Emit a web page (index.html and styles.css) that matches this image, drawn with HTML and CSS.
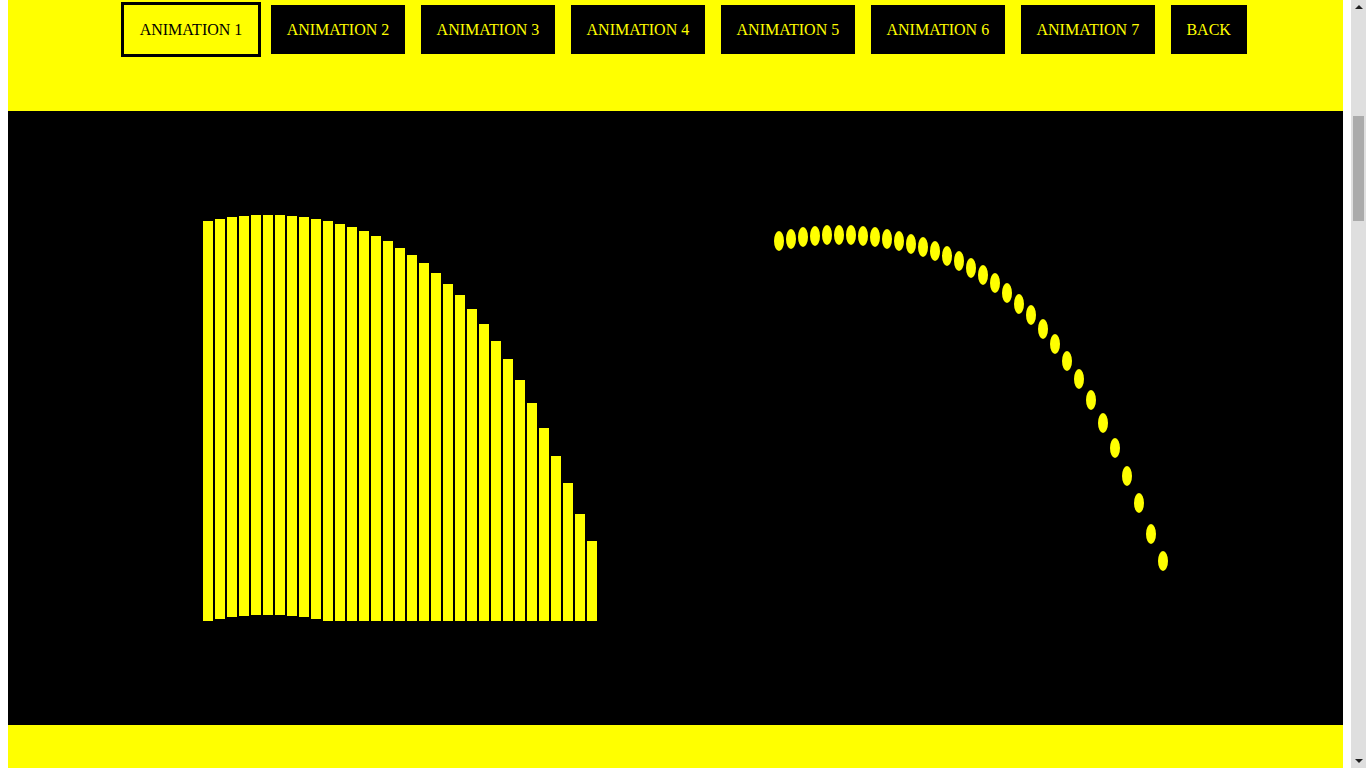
FILE: index.html
```html
<!DOCTYPE html>
<html lang="en">
<head>
<meta charset="utf-8">
<title>Animations</title>
<link rel="stylesheet" href="styles.css">
</head>
<body>
<header class="top">
  <nav class="menu">
    <button class="btn active">ANIMATION 1</button>
    <button class="btn">ANIMATION 2</button>
    <button class="btn">ANIMATION 3</button>
    <button class="btn">ANIMATION 4</button>
    <button class="btn">ANIMATION 5</button>
    <button class="btn">ANIMATION 6</button>
    <button class="btn">ANIMATION 7</button>
    <button class="btn">BACK</button>
  </nav>
</header>
<main class="stage">
  <div class="bars">
    <div class="bar" style="height:400px;margin-bottom:0px"></div>
    <div class="bar" style="height:400px;margin-bottom:2px"></div>
    <div class="bar" style="height:400px;margin-bottom:4px"></div>
    <div class="bar" style="height:400px;margin-bottom:5px"></div>
    <div class="bar" style="height:400px;margin-bottom:6px"></div>
    <div class="bar" style="height:400px;margin-bottom:6px"></div>
    <div class="bar" style="height:400px;margin-bottom:6px"></div>
    <div class="bar" style="height:400px;margin-bottom:5px"></div>
    <div class="bar" style="height:400px;margin-bottom:4px"></div>
    <div class="bar" style="height:400px;margin-bottom:2px"></div>
    <div class="bar" style="height:400px;margin-bottom:0px"></div>
    <div class="bar" style="height:397px"></div>
    <div class="bar" style="height:394px"></div>
    <div class="bar" style="height:390px"></div>
    <div class="bar" style="height:385px"></div>
    <div class="bar" style="height:380px"></div>
    <div class="bar" style="height:373px"></div>
    <div class="bar" style="height:366px"></div>
    <div class="bar" style="height:358px"></div>
    <div class="bar" style="height:348px"></div>
    <div class="bar" style="height:337px"></div>
    <div class="bar" style="height:326px"></div>
    <div class="bar" style="height:312px"></div>
    <div class="bar" style="height:297px"></div>
    <div class="bar" style="height:280px"></div>
    <div class="bar" style="height:262px"></div>
    <div class="bar" style="height:241px"></div>
    <div class="bar" style="height:218px"></div>
    <div class="bar" style="height:193px"></div>
    <div class="bar" style="height:165px"></div>
    <div class="bar" style="height:138px"></div>
    <div class="bar" style="height:107px"></div>
    <div class="bar" style="height:80px"></div>
  </div>
  <div class="dots">
    <div class="dot" style="margin-top:6px"></div>
    <div class="dot" style="margin-top:4px"></div>
    <div class="dot" style="margin-top:2px"></div>
    <div class="dot" style="margin-top:1px"></div>
    <div class="dot" style="margin-top:0px"></div>
    <div class="dot" style="margin-top:0px"></div>
    <div class="dot" style="margin-top:0px"></div>
    <div class="dot" style="margin-top:1px"></div>
    <div class="dot" style="margin-top:2px"></div>
    <div class="dot" style="margin-top:4px"></div>
    <div class="dot" style="margin-top:6px"></div>
    <div class="dot" style="margin-top:9px"></div>
    <div class="dot" style="margin-top:12px"></div>
    <div class="dot" style="margin-top:16px"></div>
    <div class="dot" style="margin-top:21px"></div>
    <div class="dot" style="margin-top:26px"></div>
    <div class="dot" style="margin-top:33px"></div>
    <div class="dot" style="margin-top:40px"></div>
    <div class="dot" style="margin-top:48px"></div>
    <div class="dot" style="margin-top:58px"></div>
    <div class="dot" style="margin-top:69px"></div>
    <div class="dot" style="margin-top:80px"></div>
    <div class="dot" style="margin-top:94px"></div>
    <div class="dot" style="margin-top:109px"></div>
    <div class="dot" style="margin-top:126px"></div>
    <div class="dot" style="margin-top:144px"></div>
    <div class="dot" style="margin-top:165px"></div>
    <div class="dot" style="margin-top:188px"></div>
    <div class="dot" style="margin-top:213px"></div>
    <div class="dot" style="margin-top:241px"></div>
    <div class="dot" style="margin-top:268px"></div>
    <div class="dot" style="margin-top:299px"></div>
    <div class="dot" style="margin-top:326px"></div>
  </div>
</main>
<footer class="bottom"></footer>
<div class="scrollbar" aria-hidden="true">
  <span class="arrow up"></span>
  <span class="thumb"></span>
  <span class="arrow down"></span>
</div>
</body>
</html>
```

FILE: styles.css
```css
html, body {
  background: #ffffff;
}
body {
  margin: 0 23px 0 8px;
  font-family: "Liberation Serif", "Times New Roman", serif;
}
.top {
  background: #ffff00;
  height: 111px;
  box-sizing: border-box;
  padding: 2px 0 0 113px;
}
.menu {
  display: flex;
  align-items: center;
  gap: 16px;
  height: 55px;
}
.btn {
  font-family: "Liberation Serif", "Times New Roman", serif;
  font-size: 16px;
  line-height: 19px;
  color: #ffff00;
  background: #000000;
  border: 0;
  padding: 15px 15.66px;
  margin: 0;
  height: 49px;
  box-sizing: border-box;
  white-space: nowrap;
}
.btn.active {
  background: #ffff00;
  color: #000000;
  border: 3px solid #000000;
  height: 55px;
  margin-right: -6px;
}
.stage {
  background: #000000;
  height: 614px;
  box-sizing: border-box;
  padding: 104px 0 0 195px;
  display: flex;
  align-items: flex-start;
}
.bars {
  display: flex;
  align-items: flex-end;
  gap: 2px;
  height: 406px;
}
.bar {
  width: 10px;
  background: #ffff00;
}
.dots {
  display: flex;
  align-items: flex-start;
  gap: 2px;
  margin: 10px 0 0 177px;
}
.dot {
  width: 10px;
  height: 20px;
  border-radius: 50%;
  background: #ffff00;
}
.bottom {
  background: #ffff00;
  height: 300px;
}
.scrollbar {
  position: fixed;
  top: 0;
  right: 0;
  width: 15px;
  height: 100vh;
  background: #dfdfdf;
  display: flex;
  flex-direction: column;
  align-items: center;
}
.arrow {
  width: 0;
  height: 0;
  border-left: 4px solid transparent;
  border-right: 4px solid transparent;
}
.arrow.up {
  margin-top: 5px;
  border-bottom: 4px solid #202020;
}
.arrow.down {
  margin-top: auto;
  margin-bottom: 5px;
  border-top: 4px solid #202020;
}
.thumb {
  width: 11px;
  height: 105px;
  margin-top: 107px;
  background: #ababab;
}
```
